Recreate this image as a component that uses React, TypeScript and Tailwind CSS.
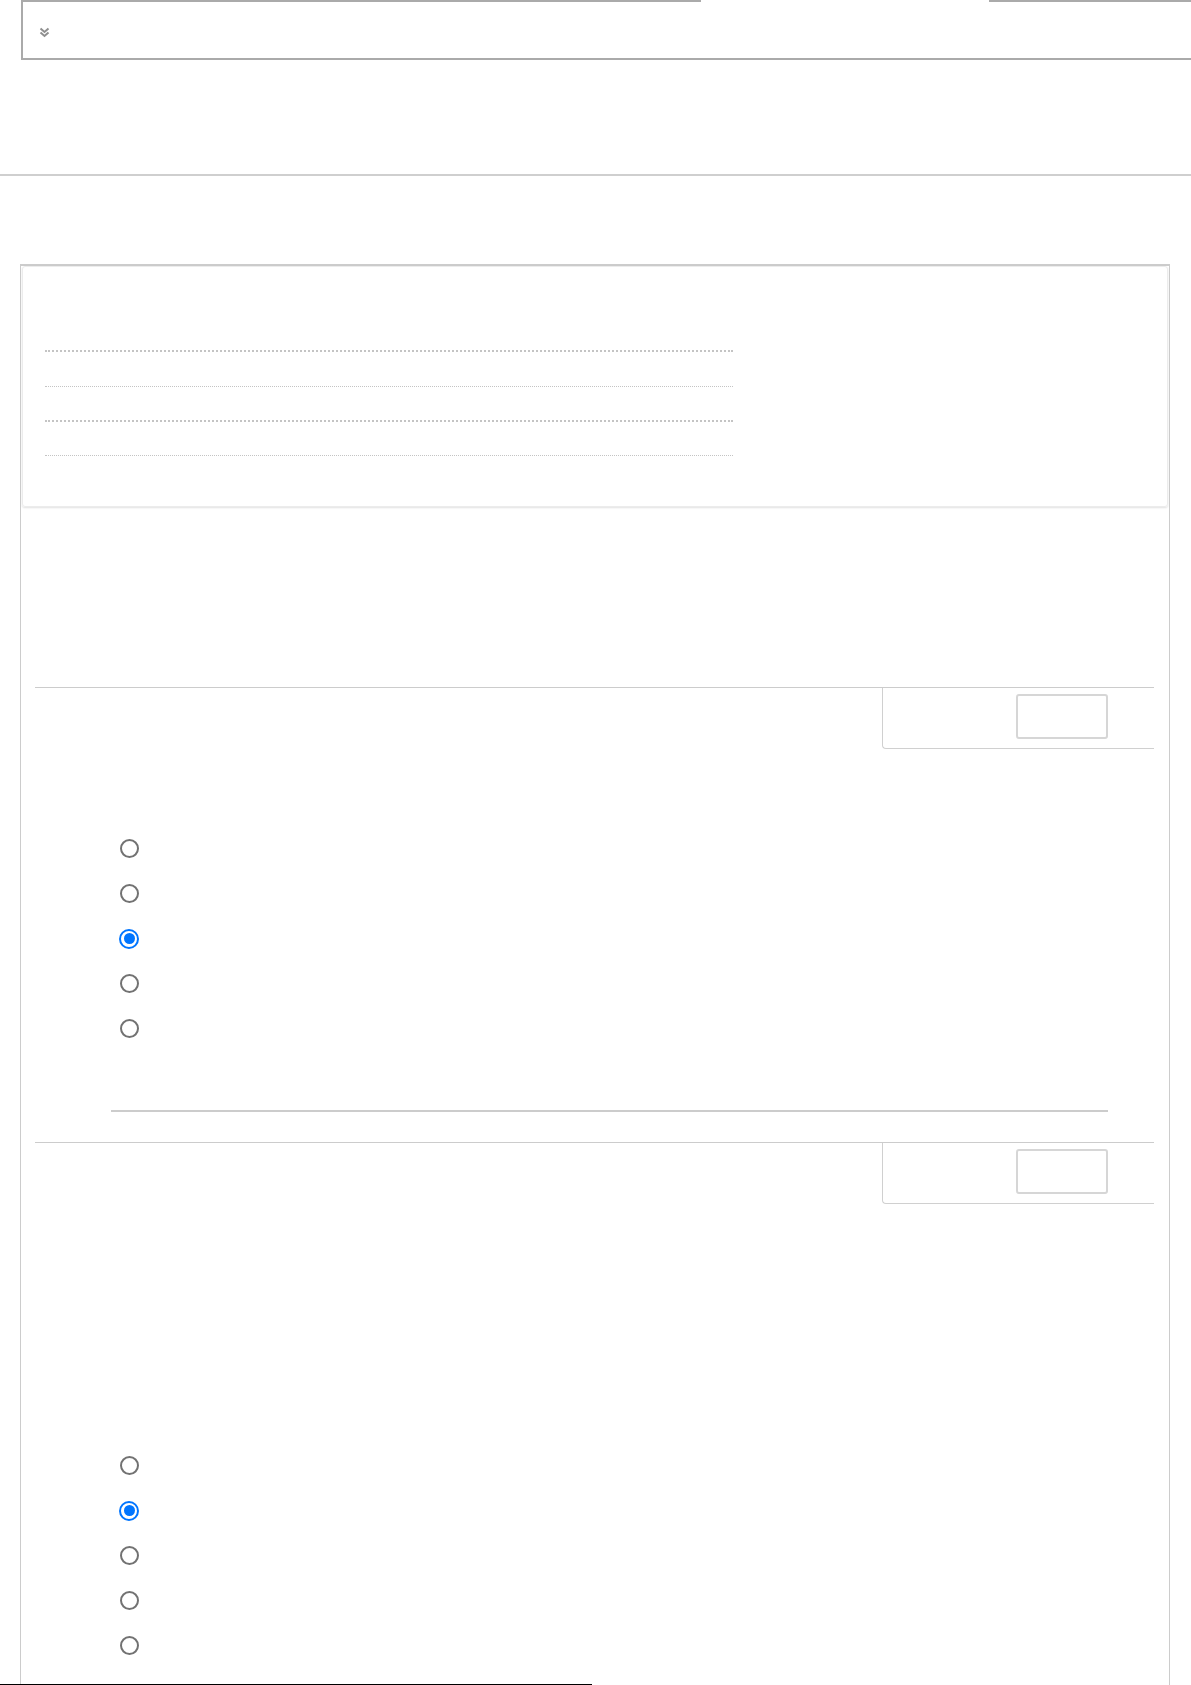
import React from 'react'

const Radio = ({ checked }: { checked?: boolean }) =>
  checked ? (
    <span className="flex h-[20px] w-[20px] items-center justify-center rounded-full border-2 border-[#0075ff] bg-white">
      <span className="h-[11px] w-[11px] rounded-full bg-[#0075ff]" />
    </span>
  ) : (
    <span className="h-[19px] w-[19px] rounded-full border-2 border-[#727272] bg-white" />
  )

const Question = ({ picked, gap }: { picked: number; gap: string }) => (
  <section className="ml-[14px] w-[1119px] border-t border-[#cccccc]">
    {/* score box on the right */}
    <div className="flex justify-end">
      <div className="flex h-[61px] w-[272px] items-start justify-end rounded-bl-[4px] border-b border-l border-[#d0d0d0] pt-[6px] pr-[46px]">
        <div className="h-[45px] w-[92px] rounded-[3px] border-2 border-[#d6d6d6] bg-white" />
      </div>
    </div>
    <ul className={gap + ' ml-[84px] flex flex-col'}>
      {[0, 1, 2, 3, 4].map((i) => (
        <li key={i} className="flex h-[45px] w-[20px] items-center justify-center">
          <Radio checked={i === picked} />
        </li>
      ))}
    </ul>
  </section>
)

export default function App() {
  return (
    <div className="relative h-[1685px] w-[1191px] overflow-hidden bg-white font-['Liberation_Sans',sans-serif]">
      {/* collapsed top box */}
      <div className="ml-[21px] flex h-[60px] w-[1200px] flex-col border-r-2 border-b-2 border-l-2 border-[#aaaaaa]">
        <div className="flex h-[2px]">
          <div className="w-[678px] bg-[#aaaaaa]" />
          <div className="w-[288px]" />
          <div className="flex-1 bg-[#aaaaaa]" />
        </div>
        <div className="flex flex-1 items-center pl-[16px] pt-[4px]">
          <svg width="11" height="11" viewBox="0 0 11 11" fill="none" stroke="#8f8f8f" strokeWidth="2">
            <path d="M1.5 1.5l4 3.5 4-3.5" />
            <path d="M1.5 5.5l4 3.5 4-3.5" />
          </svg>
        </div>
      </div>

      <div className="mt-[114px] h-[2px] w-full bg-[#cfcfcf]" />

      {/* main panel */}
      <div className="mt-[88px] ml-[20px] flex h-[1500px] w-[1150px] flex-col border-x border-t-2 border-[#cccccc]">
        <div className="mx-px rounded-[3px] border border-[#ececec] pt-[83px] pb-[50px] pl-[22px] shadow-[0_1px_2px_rgba(0,0,0,0.12)]">
          <div className="w-[688px]">
            <div className="h-[36px] border-t-2 border-dotted border-[#c4c4c4]" />
            <div className="h-[34px] border-t border-dotted border-[#c4c4c4]" />
            <div className="h-[35px] border-t-2 border-dotted border-[#c4c4c4]" />
            <div className="h-px border-t border-dotted border-[#c4c4c4]" />
          </div>
        </div>

        <div className="mt-[180px]">
          <Question picked={2} gap="mt-[77px]" />
          <div className="mt-[59px] ml-[90px] h-[2px] w-[997px] bg-[#cccccc]" />
        </div>

        <div className="mt-[30px]">
          <Question picked={1} gap="mt-[239px]" />
        </div>
      </div>

      <div className="absolute bottom-0 left-0 h-px w-[592px] bg-black" />
    </div>
  )
}
